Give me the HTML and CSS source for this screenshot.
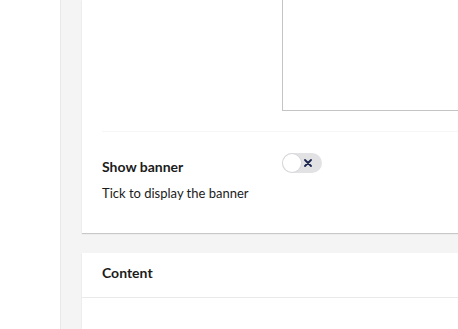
FILE: index.html
```html
<!DOCTYPE html>
<html>
<head>
<meta charset="utf-8">
<link rel="stylesheet" href="styles.css">
</head>
<body>
<div class="app">
  <div class="sidebar"></div>
  <div class="main">
    <div class="card card-top">
      <div class="prop prop-text">
        <div class="label-col"></div>
        <div class="editor-col">
          <div class="textarea"></div>
        </div>
      </div>
      <div class="prop prop-toggle">
        <div class="label-col">
          <div class="label">Show banner</div>
          <div class="desc">Tick to display the banner</div>
        </div>
        <div class="editor-col">
          <button class="toggle" type="button" aria-label="Show banner">
            <span class="knob"></span>
            <svg class="x" width="8" height="8" viewBox="0 0 8 8"><path d="M1 1L7 7M7 1L1 7" stroke="#1b264f" stroke-width="1.8" stroke-linecap="round"/></svg>
          </button>
        </div>
      </div>
    </div>
    <div class="card card-bottom">
      <div class="card-head">Content</div>
      <div class="card-body"></div>
    </div>
  </div>
</div>
</body>
</html>
```
FILE: styles.css
```css
html, body {
  margin: 0;
  padding: 0;
  height: 100%;
  background: #fff;
  font-family: Lato, "Open Sans", sans-serif;
  color: #1b1b1b;
  overflow: hidden;
}
.app {
  display: flex;
  height: 329px;
}
.sidebar {
  width: 60px;
  flex: none;
  background: #fff;
  border-right: 1px solid #e8e8e8;
}
.main {
  flex: 1;
  background: #f4f4f4;
  padding-left: 21px;
  display: flex;
  flex-direction: column;
  gap: 20px;
}
.card {
  background: #fff;
  box-shadow: 0 1px 1px rgba(0,0,0,0.18);
}
.card-top {
  height: 233px;
  display: flex;
  flex-direction: column;
}
.prop {
  display: flex;
  margin-left: 20px;
}
.prop-text {
  height: 131px;
  border-bottom: 1px solid #f6f6f6;
}
.label-col {
  width: 180px;
  flex: none;
}
.editor-col {
  flex: 1;
}
.textarea {
  height: 110px;
  border-left: 1px solid #c4c4c4;
  border-bottom: 1px solid #c4c4c4;
  margin-right: -10px;
}
.prop-toggle {
  padding-top: 21px;
}
.label {
  font-size: 14px;
  font-weight: 700;
  line-height: 16px;
  margin-top: 6px;
}
.desc {
  font-size: 13px;
  line-height: 16px;
  margin-top: 10px;
  color: #1b1b1b;
}
.toggle {
  width: 40px;
  height: 20px;
  border: none;
  padding: 0;
  border-radius: 10px;
  background: #e2e2e4;
  position: relative;
  display: block;
  cursor: pointer;
}
.knob {
  position: absolute;
  left: 1px;
  top: 1px;
  width: 18px;
  height: 18px;
  border-radius: 50%;
  background: #fff;
  box-shadow: 0 0 0 1px #d8d8dc;
}
.x {
  position: absolute;
  right: 10px;
  top: 6px;
}
.card-bottom {
  flex: 1;
}
.card-head {
  height: 44px;
  border-bottom: 1px solid #e9e9e9;
  padding-left: 20px;
  font-size: 14px;
  font-weight: 700;
  line-height: 40px;
}
```
